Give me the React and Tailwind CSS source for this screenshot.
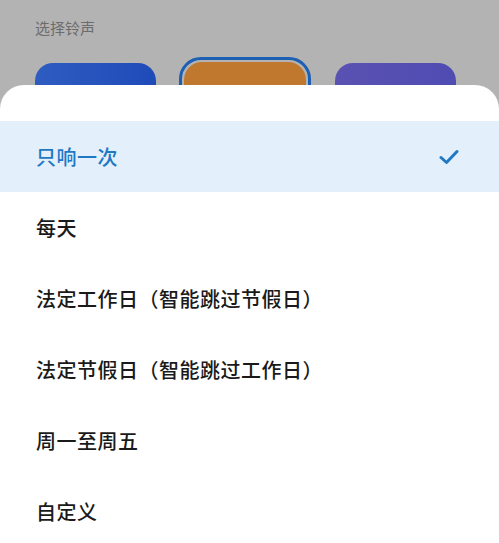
import React, { useState } from "react";

const options = [
    "只响一次",
    "每天",
    "法定工作日（智能跳过节假日）",
    "法定节假日（智能跳过工作日）",
    "周一至周五",
    "自定义",
];

const font = { fontFamily: '"Noto Sans CJK SC", "Noto Sans", sans-serif' };

function Check() {
    return (
        <svg width="20" height="16" viewBox="0 0 20 16" fill="none">
            <path d="M2 8.5 L7.5 13.5 L18 2.5" stroke="#1f78c4" strokeWidth="3" strokeLinecap="round" strokeLinejoin="round" />
        </svg>
    );
}

export default function App() {
    const [selected, setSelected] = useState(0);

    return (
        <div className="w-[499px] h-[543px] overflow-hidden bg-[#b3b3b3] flex flex-col" style={font}>
            {/* ringtone picker behind the sheet */}
            <div className="h-[85px] shrink-0 overflow-hidden px-[35px] pt-[19px]">
                <div className="text-[15px] leading-[18px] text-[#6c6c6c]">选择铃声</div>
                <div className="flex items-start mt-[20px]">
                    <div className="w-[121px] h-[80px] mt-[6px] rounded-[18px] bg-gradient-to-r from-[#2e5cc0] to-[#1f4bb9]" />
                    <div className="ml-[23px] w-[132px] h-[90px] rounded-[22px] border-[3px] border-[#1d5fb3] p-[2px]">
                        <div className="w-full h-full rounded-[18px] bg-[#c0782f]" />
                    </div>
                    <div className="ml-[24px] w-[121px] h-[80px] mt-[6px] rounded-[18px] bg-gradient-to-r from-[#5a52b2] to-[#4f4cb2]" />
                </div>
            </div>

            {/* repeat options sheet */}
            <div className="flex-1 bg-white rounded-t-[24px] pt-[36px]">
                {options.map((label, i) => (
                    <div
                        key={label}
                        onClick={() => setSelected(i)}
                        className={`h-[71px] flex items-center justify-between pl-[36px] pr-[40px] cursor-pointer ${selected === i ? "bg-[#e3f0fb]" : ""}`}
                    >
                        <span className={`text-[20px] font-medium tracking-[0.5px] ${selected === i ? "text-[#1f78c4]" : "text-[#1a1a1a]"}`}>
                            {label}
                        </span>
                        {selected === i && <Check />}
                    </div>
                ))}
            </div>
        </div>
    );
}
